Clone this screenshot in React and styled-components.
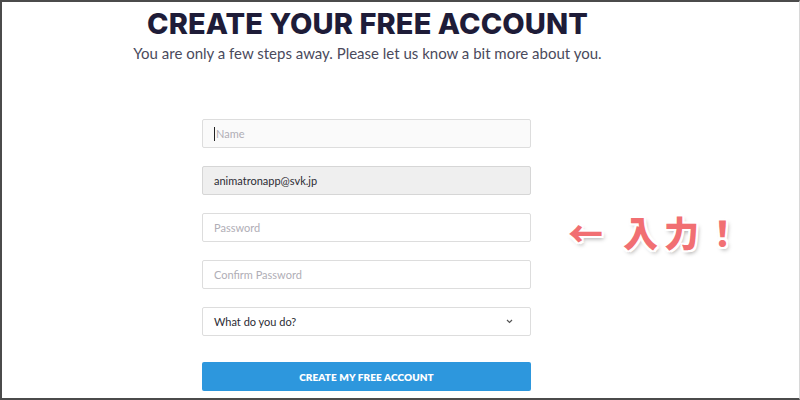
import React from "react";
import styled, { createGlobalStyle } from "styled-components";

const Global = createGlobalStyle`
  html, body {
    margin: 0;
    padding: 0;
    background: #fff;
  }
  * {
    box-sizing: border-box;
  }
`;

const Frame = styled.div`
  position: relative;
  width: 800px;
  height: 400px;
  overflow: hidden;
  background: #fff;
  border-top: 2px solid #4b4b4b;
  border-left: 2px solid #4b4b4b;
  border-bottom: 2px solid #4b4b4b;
  border-right: 1px solid #d8d8d8;
  font-family: "Lato", "Liberation Sans", sans-serif;
  display: flex;
  flex-direction: column;
  align-items: center;
`;

const Heading = styled.h1`
  margin: 5px 0 0 -66px;
  font-family: "Inter", "Liberation Sans", sans-serif;
  font-weight: 800;
  font-size: 29px;
  line-height: 34px;
  letter-spacing: 0.1px;
  color: #1e1c38;
`;

const Lead = styled.p`
  margin: 2px 0 0 -66px;
  font-size: 15px;
  line-height: 20px;
  color: #4a4a5c;
`;

const Form = styled.form`
  width: 329px;
  margin: 56px 0 0 -68px;
  display: flex;
  flex-direction: column;
  gap: 18px;
`;

const Field = styled.div`
  position: relative;
  height: 29px;
  border: 1px solid ${(p) => (p.$filled ? "#d6d6d6" : "#dddddd")};
  border-radius: 2px;
  background: ${(p) => (p.$filled ? "#efefef" : p.$soft ? "#fafafa" : "#fff")};
  display: flex;
  align-items: center;
  padding: 0 11px;
  font-size: 11px;
  color: ${(p) => (p.$placeholder ? "#b0aeb6" : "#2c2c34")};
`;

const Caret = styled.span`
  display: inline-block;
  width: 1px;
  height: 14px;
  background: #222;
  margin-right: 1px;
`;

const Chevron = styled.svg`
  margin-left: auto;
  margin-right: 6px;
`;

const Submit = styled.button`
  margin-top: 8px;
  height: 29px;
  border: none;
  border-radius: 2px;
  background: #2d97dd;
  color: #fff;
  font-family: "Lato", "Liberation Sans", sans-serif;
  font-weight: 800;
  font-size: 10px;
  letter-spacing: 0.1px;
`;

const Callout = styled.div`
  position: absolute;
  left: 566px;
  top: 208px;
  font-family: "Noto Sans CJK JP", "Noto Sans", sans-serif;
  font-weight: 900;
  font-size: 35px;
  line-height: 44px;
  color: #f16f72;
  letter-spacing: 6px;
  text-shadow: -2px -2px 0 #fff, 2px -2px 0 #fff, -2px 2px 0 #fff, 2px 2px 0 #fff,
    0 -2px 0 #fff, 0 2px 0 #fff, -2px 0 0 #fff, 2px 0 0 #fff,
    2px 3px 4px rgba(0, 0, 0, 0.35);
`;

export default function App() {
  return (
    <>
      <Global />
      <Frame>
        <Heading>CREATE YOUR FREE ACCOUNT</Heading>
        <Lead>You are only a few steps away. Please let us know a bit more about you.</Lead>
        <Form onSubmit={(e) => e.preventDefault()}>
          <Field $soft $placeholder>
            <Caret />
            Name
          </Field>
          <Field $filled>animatronapp@svk.jp</Field>
          <Field $placeholder>Password</Field>
          <Field $placeholder>Confirm Password</Field>
          <Field>
            What do you do?
            <Chevron width="7" height="5" viewBox="0 0 7 5">
              <path d="M1 1 L3.5 3.5 L6 1" fill="none" stroke="#555" strokeWidth="1.2" />
            </Chevron>
          </Field>
          <Submit type="submit">CREATE MY FREE ACCOUNT</Submit>
        </Form>
        <Callout>← 入力！</Callout>
      </Frame>
    </>
  );
}
